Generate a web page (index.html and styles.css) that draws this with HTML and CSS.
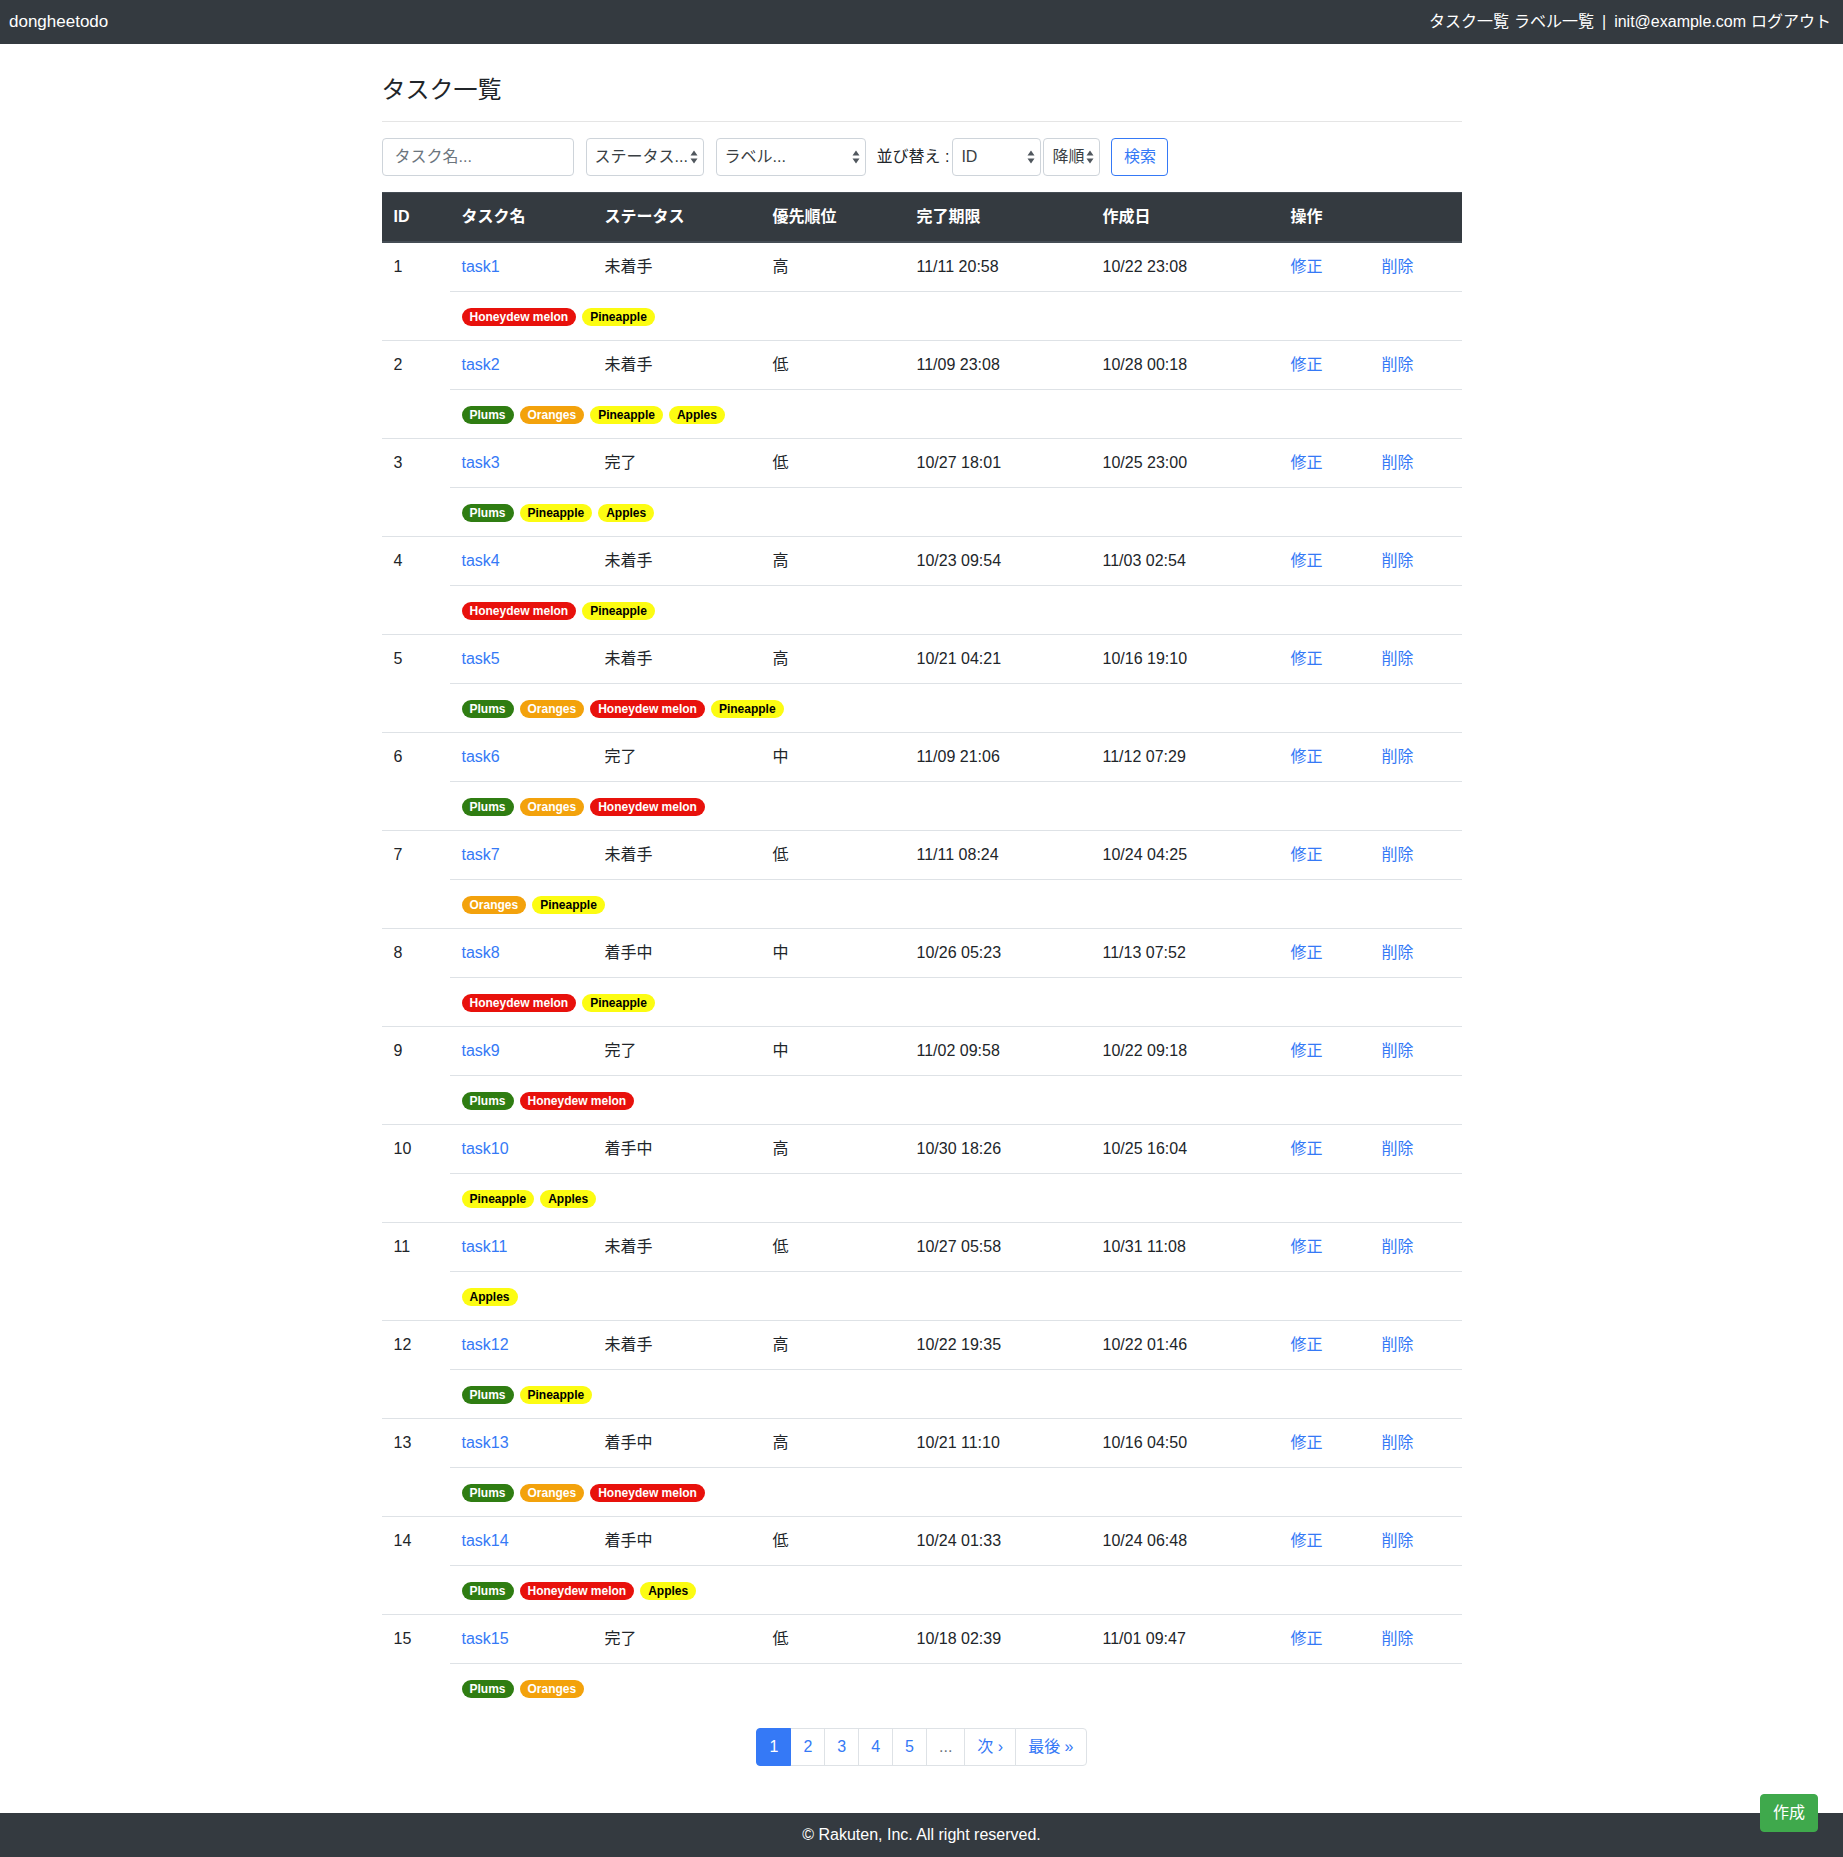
FILE: index.html
```html
<!DOCTYPE html>
<html lang="ja">
<head>
<meta charset="utf-8">
<title>タスク一覧</title>
<link rel="stylesheet" href="styles.css">
</head>
<body>
<nav class="navbar">
  <a class="brand" href="#">dongheetodo</a>
  <div class="nav-right">
    <a class="nav-link" href="#">タスク一覧</a>
    <a class="nav-link" href="#">ラベル一覧</a>
    <span class="sep">|</span>
    <span class="nav-user">init@example.com</span>
    <a class="nav-link" href="#">ログアウト</a>
  </div>
</nav>

<main class="container">
  <h4 class="page-title">タスク一覧</h4>
  <hr class="rule">
  <form class="search">
    <input class="fc input-name" type="text" placeholder="タスク名...">
    <span class="selwrap w-status">
      <select class="fsel"><option>ステータス...</option></select>
      <svg class="arrows" width="8" height="14" viewBox="0 0 8 14"><path d="M4 0.5 L7.5 5.5 L0.5 5.5 Z M4 13.5 L7.5 8.5 L0.5 8.5 Z" fill="#50575e"/></svg>
    </span>
    <span class="selwrap w-label">
      <select class="fsel"><option>ラベル...</option></select>
      <svg class="arrows" width="8" height="14" viewBox="0 0 8 14"><path d="M4 0.5 L7.5 5.5 L0.5 5.5 Z M4 13.5 L7.5 8.5 L0.5 8.5 Z" fill="#50575e"/></svg>
    </span>
    <label class="sort-label">並び替え :</label>
    <span class="selwrap w-sort">
      <select class="fsel"><option>ID</option></select>
      <svg class="arrows" width="8" height="14" viewBox="0 0 8 14"><path d="M4 0.5 L7.5 5.5 L0.5 5.5 Z M4 13.5 L7.5 8.5 L0.5 8.5 Z" fill="#50575e"/></svg>
    </span>
    <span class="selwrap w-order">
      <select class="fsel fsel-tight"><option>降順</option></select>
      <svg class="arrows" width="8" height="14" viewBox="0 0 8 14"><path d="M4 0.5 L7.5 5.5 L0.5 5.5 Z M4 13.5 L7.5 8.5 L0.5 8.5 Z" fill="#50575e"/></svg>
    </span>
    <button class="btn-outline" type="button">検索</button>
  </form>

  <table class="tasks">
    <colgroup>
      <col class="c-id"><col class="c-name"><col class="c-status"><col class="c-prio">
      <col class="c-due"><col class="c-created"><col class="c-edit"><col class="c-del">
    </colgroup>
    <thead>
      <tr><th>ID</th><th>タスク名</th><th>ステータス</th><th>優先順位</th><th>完了期限</th><th>作成日</th><th colspan="2">操作</th></tr>
    </thead>
    <tbody>
      <tr><td rowspan="2">1</td><td><a href="#">task1</a></td><td>未着手</td><td>高</td><td>11/11 20:58</td><td>10/22 23:08</td><td><a href="#">修正</a></td><td><a href="#">削除</a></td></tr>
      <tr><td colspan="7"><div class="badges"><span class="badge b-red">Honeydew melon</span><span class="badge b-yellow">Pineapple</span></div></td></tr>

      <tr><td rowspan="2">2</td><td><a href="#">task2</a></td><td>未着手</td><td>低</td><td>11/09 23:08</td><td>10/28 00:18</td><td><a href="#">修正</a></td><td><a href="#">削除</a></td></tr>
      <tr><td colspan="7"><div class="badges"><span class="badge b-green">Plums</span><span class="badge b-orange">Oranges</span><span class="badge b-yellow">Pineapple</span><span class="badge b-yellow">Apples</span></div></td></tr>

      <tr><td rowspan="2">3</td><td><a href="#">task3</a></td><td>完了</td><td>低</td><td>10/27 18:01</td><td>10/25 23:00</td><td><a href="#">修正</a></td><td><a href="#">削除</a></td></tr>
      <tr><td colspan="7"><div class="badges"><span class="badge b-green">Plums</span><span class="badge b-yellow">Pineapple</span><span class="badge b-yellow">Apples</span></div></td></tr>

      <tr><td rowspan="2">4</td><td><a href="#">task4</a></td><td>未着手</td><td>高</td><td>10/23 09:54</td><td>11/03 02:54</td><td><a href="#">修正</a></td><td><a href="#">削除</a></td></tr>
      <tr><td colspan="7"><div class="badges"><span class="badge b-red">Honeydew melon</span><span class="badge b-yellow">Pineapple</span></div></td></tr>

      <tr><td rowspan="2">5</td><td><a href="#">task5</a></td><td>未着手</td><td>高</td><td>10/21 04:21</td><td>10/16 19:10</td><td><a href="#">修正</a></td><td><a href="#">削除</a></td></tr>
      <tr><td colspan="7"><div class="badges"><span class="badge b-green">Plums</span><span class="badge b-orange">Oranges</span><span class="badge b-red">Honeydew melon</span><span class="badge b-yellow">Pineapple</span></div></td></tr>

      <tr><td rowspan="2">6</td><td><a href="#">task6</a></td><td>完了</td><td>中</td><td>11/09 21:06</td><td>11/12 07:29</td><td><a href="#">修正</a></td><td><a href="#">削除</a></td></tr>
      <tr><td colspan="7"><div class="badges"><span class="badge b-green">Plums</span><span class="badge b-orange">Oranges</span><span class="badge b-red">Honeydew melon</span></div></td></tr>

      <tr><td rowspan="2">7</td><td><a href="#">task7</a></td><td>未着手</td><td>低</td><td>11/11 08:24</td><td>10/24 04:25</td><td><a href="#">修正</a></td><td><a href="#">削除</a></td></tr>
      <tr><td colspan="7"><div class="badges"><span class="badge b-orange">Oranges</span><span class="badge b-yellow">Pineapple</span></div></td></tr>

      <tr><td rowspan="2">8</td><td><a href="#">task8</a></td><td>着手中</td><td>中</td><td>10/26 05:23</td><td>11/13 07:52</td><td><a href="#">修正</a></td><td><a href="#">削除</a></td></tr>
      <tr><td colspan="7"><div class="badges"><span class="badge b-red">Honeydew melon</span><span class="badge b-yellow">Pineapple</span></div></td></tr>

      <tr><td rowspan="2">9</td><td><a href="#">task9</a></td><td>完了</td><td>中</td><td>11/02 09:58</td><td>10/22 09:18</td><td><a href="#">修正</a></td><td><a href="#">削除</a></td></tr>
      <tr><td colspan="7"><div class="badges"><span class="badge b-green">Plums</span><span class="badge b-red">Honeydew melon</span></div></td></tr>

      <tr><td rowspan="2">10</td><td><a href="#">task10</a></td><td>着手中</td><td>高</td><td>10/30 18:26</td><td>10/25 16:04</td><td><a href="#">修正</a></td><td><a href="#">削除</a></td></tr>
      <tr><td colspan="7"><div class="badges"><span class="badge b-yellow">Pineapple</span><span class="badge b-yellow">Apples</span></div></td></tr>

      <tr><td rowspan="2">11</td><td><a href="#">task11</a></td><td>未着手</td><td>低</td><td>10/27 05:58</td><td>10/31 11:08</td><td><a href="#">修正</a></td><td><a href="#">削除</a></td></tr>
      <tr><td colspan="7"><div class="badges"><span class="badge b-yellow">Apples</span></div></td></tr>

      <tr><td rowspan="2">12</td><td><a href="#">task12</a></td><td>未着手</td><td>高</td><td>10/22 19:35</td><td>10/22 01:46</td><td><a href="#">修正</a></td><td><a href="#">削除</a></td></tr>
      <tr><td colspan="7"><div class="badges"><span class="badge b-green">Plums</span><span class="badge b-yellow">Pineapple</span></div></td></tr>

      <tr><td rowspan="2">13</td><td><a href="#">task13</a></td><td>着手中</td><td>高</td><td>10/21 11:10</td><td>10/16 04:50</td><td><a href="#">修正</a></td><td><a href="#">削除</a></td></tr>
      <tr><td colspan="7"><div class="badges"><span class="badge b-green">Plums</span><span class="badge b-orange">Oranges</span><span class="badge b-red">Honeydew melon</span></div></td></tr>

      <tr><td rowspan="2">14</td><td><a href="#">task14</a></td><td>着手中</td><td>低</td><td>10/24 01:33</td><td>10/24 06:48</td><td><a href="#">修正</a></td><td><a href="#">削除</a></td></tr>
      <tr><td colspan="7"><div class="badges"><span class="badge b-green">Plums</span><span class="badge b-red">Honeydew melon</span><span class="badge b-yellow">Apples</span></div></td></tr>

      <tr><td rowspan="2">15</td><td><a href="#">task15</a></td><td>完了</td><td>低</td><td>10/18 02:39</td><td>11/01 09:47</td><td><a href="#">修正</a></td><td><a href="#">削除</a></td></tr>
      <tr><td colspan="7"><div class="badges"><span class="badge b-green">Plums</span><span class="badge b-orange">Oranges</span></div></td></tr>
    </tbody>
  </table>

  <ul class="pager">
    <li><span class="page-link active">1</span></li>
    <li><a class="page-link" href="#">2</a></li>
    <li><a class="page-link" href="#">3</a></li>
    <li><a class="page-link" href="#">4</a></li>
    <li><a class="page-link" href="#">5</a></li>
    <li><span class="page-link disabled">...</span></li>
    <li><a class="page-link" href="#">次 ›</a></li>
    <li><a class="page-link last" href="#">最後 »</a></li>
  </ul>
</main>

<footer class="footer">© Rakuten, Inc. All right reserved.</footer>

<a class="btn-create" href="#">作成</a>
</body>
</html>
```

FILE: styles.css
```css
* { box-sizing: border-box; }

html, body { margin: 0; padding: 0; }

body {
  font-family: "Liberation Sans", "Noto Sans CJK JP", sans-serif;
  font-size: 16px;
  line-height: 1.5;
  color: #212529;
  background: #fff;
  min-height: 100vh;
  display: flex;
  flex-direction: column;
}

a { color: #3579f6; text-decoration: none; }

/* navbar */
.navbar {
  height: 44px;
  flex: none;
  background: #343a40;
  display: flex;
  align-items: center;
  justify-content: space-between;
  padding: 0 12px 0 9px;
  color: #fff;
}
.brand { color: #fff; font-size: 17px; }
.nav-right { display: flex; align-items: center; gap: 5px; }
.nav-link { color: #fff; }
.nav-user { color: #fff; }
.sep { margin: 0 3px; color: #fff; }

/* main */
.container {
  width: 1080px;
  margin: 0 auto;
  padding-top: 32px;
  flex: 1 0 auto;
}
.page-title {
  font-size: 24px;
  font-weight: 400;
  line-height: 1.2;
  margin: 0 0 8px;
}
.rule {
  margin: 16px 0;
  border: 0;
  border-top: 1px solid rgba(0, 0, 0, 0.1);
}

/* search form */
.search {
  display: flex;
  align-items: center;
  height: 38px;
  margin: 0 0 16px;
}
.fc {
  height: 38px;
  border: 1px solid #ced4da;
  border-radius: 4px;
  font: inherit;
  padding: 6px 12px;
  color: #495057;
  background: #fff;
}
.fc::placeholder { color: #6c757d; }
.input-name { width: 192px; margin-right: 12px; }

.selwrap {
  position: relative;
  display: inline-block;
  height: 38px;
  flex: none;
}
.fsel {
  -webkit-appearance: none;
  appearance: none;
  width: 100%;
  height: 38px;
  border: 1px solid #ced4da;
  border-radius: 4px;
  padding: 0 14px 0 8px;
  font: inherit;
  color: #3a3f44;
  background: #fff;
}
.fsel-tight { padding-right: 0; }
.arrows {
  position: absolute;
  right: 6px;
  top: 12px;
  pointer-events: none;
}
.w-status { width: 118px; margin-right: 12px; }
.w-label { width: 150px; margin-right: 11px; }
.w-sort { width: 89px; margin-right: 2px; }
.w-order { width: 57px; margin-right: 11px; }
.sort-label { margin-right: 3px; white-space: nowrap; }

.btn-outline {
  width: 57px;
  height: 38px;
  border: 1px solid #3579f6;
  color: #3579f6;
  background: #fff;
  border-radius: 4px;
  font: inherit;
  padding: 0;
}

/* table */
.tasks {
  width: 100%;
  border-collapse: collapse;
  table-layout: fixed;
  margin-bottom: 16px;
}
.c-id { width: 68px; }
.c-name { width: 143px; }
.c-status { width: 168px; }
.c-prio { width: 144px; }
.c-due { width: 186px; }
.c-created { width: 188px; }
.c-edit { width: 91px; }
.c-del { width: 92px; }

.tasks th,
.tasks td {
  padding: 12px;
  line-height: 24px;
  text-align: left;
  vertical-align: top;
  border-top: 1px solid #dee2e6;
}
.tasks thead th {
  background: #343a40;
  color: #fff;
  font-weight: 700;
  border-top: 1px solid #454d55;
  border-bottom: 2px solid #454d55;
  white-space: nowrap;
}

.badges {
  display: flex;
  align-items: center;
  gap: 6px;
  height: 24px;
  padding-top: 3px;
}
.badge {
  display: inline-block;
  font-size: 12px;
  font-weight: 700;
  line-height: 1;
  padding: 3px 8px;
  border-radius: 10rem;
  white-space: nowrap;
  color: #fff;
}
.b-red { background: #e8110c; }
.b-green { background: #2f7d12; }
.b-orange { background: #f3a20c; }
.b-yellow { background: #fcfc12; color: #000; }

/* pagination */
.pager {
  display: flex;
  justify-content: center;
  list-style: none;
  margin: 0 0 16px;
  padding: 0;
}
.page-link {
  display: block;
  padding: 8px 12px;
  line-height: 20px;
  border: 1px solid #dee2e6;
  margin-left: -1px;
  color: #3579f6;
  background: #fff;
}
.pager li:first-child .page-link {
  margin-left: 0;
  border-radius: 4px 0 0 4px;
}
.page-link.last { border-radius: 0 4px 4px 0; }
.page-link.active {
  background: #3579f6;
  border-color: #3579f6;
  color: #fff;
  position: relative;
}
.page-link.disabled { color: #6c757d; }

/* footer */
.footer {
  flex: none;
  height: 44px;
  background: #343a40;
  color: #fff;
  text-align: center;
  line-height: 44px;
}

.btn-create {
  position: fixed;
  right: 25px;
  bottom: 25px;
  background: #3fa94c;
  border: 1px solid #3fa94c;
  color: #fff;
  padding: 6px 12px;
  line-height: 24px;
  border-radius: 4px;
}
```
